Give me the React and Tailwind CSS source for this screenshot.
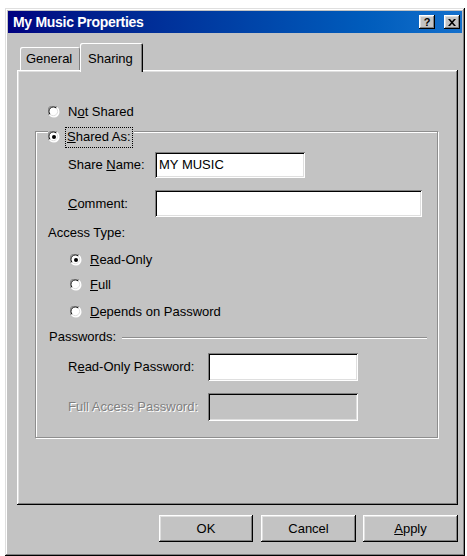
import React from "react";

const FONT = "font-['Liberation_Sans',Arial,sans-serif]";

const RAISED =
  "shadow-[inset_-1px_-1px_0_#000,inset_1px_1px_0_#fff,inset_-2px_-2px_0_#808080,inset_2px_2px_0_#dfdfdf]";
const SUNKEN =
  "shadow-[inset_1px_1px_0_#808080,inset_-1px_-1px_0_#fff,inset_2px_2px_0_#000,inset_-2px_-2px_0_#dfdfdf]";

const Radio = ({ checked }) => (
  <svg width="12" height="12" viewBox="0 0 12 12" className="shrink-0">
    <circle cx="6" cy="6" r="5.5" fill="#fff" />
    <path d="M1.2 9 A5.3 5.3 0 0 1 9 1.2" fill="none" stroke="#808080" strokeWidth="1" />
    <path d="M9 1.2 A5.3 5.3 0 0 1 1.2 9" fill="none" stroke="#fff" strokeWidth="1" />
    <path d="M2.2 8.4 A4.2 4.2 0 0 1 8.4 2.2" fill="none" stroke="#000" strokeWidth="1" />
    <path d="M8.4 2.2 A4.2 4.2 0 0 1 2.2 8.4" fill="none" stroke="#dfdfdf" strokeWidth="1" />
    {checked && <circle cx="6" cy="6" r="2" fill="#000" />}
  </svg>
);

const RadioRow = ({ checked, children, className = "" }) => (
  <div className={`flex items-center h-[20px] ${className}`}>
    <Radio checked={checked} />
    <span className="ml-[8px]">{children}</span>
  </div>
);

const Field = ({ w, h, disabled, children }) => (
  <div
    className={`${SUNKEN} ${disabled ? "bg-[#c3c3c3]" : "bg-white"} flex items-center pl-[4px]`}
    style={{ width: w, height: h }}
  >
    {children}
  </div>
);

const Button = ({ w, children }) => (
  <button
    className={`${RAISED} bg-[#c3c3c3] h-[27px] flex items-center justify-center text-[13px]`}
    style={{ width: w }}
  >
    {children}
  </button>
);

export default function App() {
  return (
    <div className={`w-[467px] h-[556px] bg-white overflow-hidden text-[13px] text-black ${FONT}`}>
      <div
        className={`ml-[5px] mt-[8px] w-[460px] h-[548px] bg-[#c3c3c3] p-[3px] flex flex-col shadow-[inset_-1px_-1px_0_#000,inset_1px_1px_0_#dfdfdf,inset_-2px_-2px_0_#808080,inset_2px_2px_0_#fff]`}
      >
        {/* title bar */}
        <div className="h-[22px] flex items-center bg-gradient-to-r from-[#000080] to-[#1470cc] pl-[5px] pr-[2px]">
          <span className="text-white font-bold text-[14px] tracking-[-0.3px]">My Music Properties</span>
          <div className="ml-auto flex gap-[9px]">
            <div className={`${RAISED} bg-[#c3c3c3] w-[16px] h-[14px] flex items-center justify-center text-[11px] font-bold leading-none`}>
              ?
            </div>
            <div className={`${RAISED} bg-[#c3c3c3] w-[16px] h-[14px] flex items-center justify-center`}>
              <svg width="8" height="7" viewBox="0 0 8 7">
                <path d="M0 0h2l2 2.2L6 0h2L5 3.5 8 7H6L4 4.8 2 7H0l3-3.5z" fill="#000" />
              </svg>
            </div>
          </div>
        </div>

        {/* tabs */}
        <div className="ml-[9px] mr-[4px] mt-[10px] h-[27px] flex items-end pl-[3px]">
          <div className="h-[23px] w-[60px] bg-[#c3c3c3] flex items-center pl-[6px] shadow-[inset_1px_1px_0_#fff,inset_-1px_0_0_#808080] rounded-t-[2px]">
            General
          </div>
          <div className="relative z-10 h-[29px] -mb-[2px] w-[63px] bg-[#c3c3c3] flex items-start pt-[6px] pl-[8px] shadow-[inset_1px_1px_0_#fff,inset_-1px_0_0_#000,inset_-2px_0_0_#808080] rounded-t-[2px]">
            Sharing
          </div>
        </div>

        {/* tab panel */}
        <div className={`ml-[9px] mr-[4px] h-[435px] ${RAISED} pt-[32px] flex flex-col`}>
          <RadioRow className="pl-[31px]">
            N<u>o</u>t Shared
          </RadioRow>
          <div className="relative z-10 flex pl-[31px] mt-[5px]">
            <div className="flex items-center h-[20px] bg-[#c3c3c3] pr-[2px]">
              <Radio checked />
              <span className="ml-[6px] px-[1px] h-[19px] flex items-center outline-1 outline-dotted outline-black">
                <u>S</u>hared As:
              </span>
            </div>
          </div>

          {/* shared-as group */}
          <div className="-mt-[16px] ml-[18px] w-[403px] h-[307px] border border-[#8e8e8e] shadow-[1px_1px_0_#fff,inset_1px_1px_0_#fff] flex flex-col">
            <div className="flex items-center mt-[20px]">
              <span className="w-[119px] pl-[32px]">
                Share <u>N</u>ame:
              </span>
              <Field w={150} h={26}>
                MY MUSIC
              </Field>
            </div>
            <div className="flex items-center mt-[12px]">
              <span className="w-[119px] pl-[32px]">
                <u>C</u>omment:
              </span>
              <Field w={267} h={27} />
            </div>
            <div className="h-[18px] flex items-center pl-[12px] mt-[7px]">Access Type:</div>
            <RadioRow checked className="pl-[34px] mt-[8px]">
              <u>R</u>ead-Only
            </RadioRow>
            <RadioRow className="pl-[34px] mt-[5px]">
              <u>F</u>ull
            </RadioRow>
            <RadioRow className="pl-[34px] mt-[7px]">
              <u>D</u>epends on Password
            </RadioRow>
            <div className="h-[18px] flex items-center pl-[13px] mt-[6px] pr-[10px]">
              <span>Passwords:</span>
              <div className="flex-1 ml-[6px] border-t border-[#8e8e8e] shadow-[0_1px_0_#fff]" />
            </div>
            <div className="flex items-center mt-[7px]">
              <span className="w-[172px] pl-[32px]">
                R<u>e</u>ad-Only Password:
              </span>
              <Field w={150} h={28} />
            </div>
            <div className="flex items-center mt-[12px]">
              <span className="w-[172px] pl-[32px] text-[#808080] [text-shadow:1px_1px_0_#fff]">
                Full Access Password:
              </span>
              <Field w={150} h={28} disabled />
            </div>
          </div>
        </div>

        {/* dialog buttons */}
        <div className="mt-[10px] mr-[4px] flex justify-end">
          <Button w={94}>OK</Button>
          <div className="w-[8px]" />
          <Button w={95}>Cancel</Button>
          <div className="w-[7px]" />
          <Button w={95}>
            <u>A</u>pply
          </Button>
        </div>
      </div>
    </div>
  );
}
